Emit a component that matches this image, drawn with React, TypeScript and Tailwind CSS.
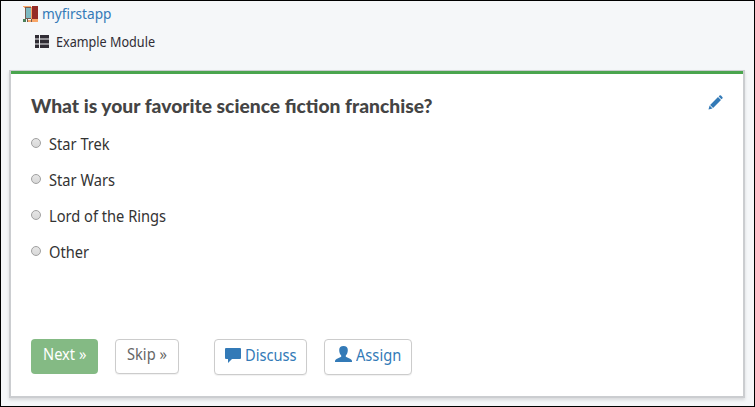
import React from "react";

const body = "font-['Noto_Sans',sans-serif]";

function Logo() {
  return (
    <svg width="15" height="16" viewBox="0 0 15 16" className="mt-[2px] shrink-0" shapeRendering="crispEdges">
      <path fill="#f9a668" d="M0 0h8v1H0zM1 1h1v1H1zM8 1h1v12H8zM9 13h6v3H9zM4 14h4v2H4z" />
      <path fill="#765b50" d="M2 1h1v12H2zM3 1h5v1H3zM3 12h5v1H3zM4 13h1v3H4zM8 13h1v3H8z" />
      <path fill="#7cb9c1" d="M3 2h5v10H3z" />
      <path fill="#942b27" d="M9 0h6v13H9z" />
      <path fill="#4b8058" d="M0 13h3v3H0z" />
    </svg>
  );
}

function ListIcon() {
  return (
    <svg width="14" height="13" viewBox="0 0 14 13" fill="#302d35" className="mb-[2px] shrink-0">
      <path d="M0 0h4v3.600H0zM5 0h9v3.600H5zM0 4.600h4v3.800H0zM5 4.600h9v3.800H5zM0 9.400h4V13H0zM5 9.400h9V13H5z" />
    </svg>
  );
}

function Pencil() {
  return (
    <svg width="15" height="15" viewBox="0 0 15 15" fill="#337ab7" className="shrink-0">
      <path d="M10.700 1.400 11.500.6q.8-.8 1.500 0l1.300 1.300q.7.7 0 1.500l-.9.9zM10 2l3 3-7.900 7.900-3-3zM1.600 10.500l2.900 2.900-4 1.100z" />
    </svg>
  );
}

const options = ["Star Trek", "Star Wars", "Lord of the Rings", "Other"];

const label = "inline-block origin-left scale-x-[0.915] whitespace-nowrap text-[16px]";
const button =
  "flex items-center rounded-[4px] border border-[#ccc] bg-white shadow-[0_1px_1px_rgba(0,0,0,0.06)]";

export default function App() {
  return (
    <div className={`${body} flex h-[407px] w-[755px] flex-col border border-black bg-[#f5f7f9] text-[#333]`}>
      <header className="h-[69px] shrink-0">
        <a className="flex h-6 items-center gap-[4px] pl-[22px] text-[#337ab7]">
          <Logo />
          <span className="inline-block origin-left scale-x-[0.91] text-[15px]">myfirstapp</span>
        </a>
        <div className="mt-[5px] flex h-6 items-center gap-[7px] pl-[34px] text-[#302d35]">
          <ListIcon />
          <span className="inline-block origin-left scale-x-[0.935] text-[13.5px]">Example Module</span>
        </div>
      </header>
      <main className="mx-2 h-[328px] w-[736px] shrink-0 border-x-2 border-t border-b-2 border-[#cbcdd0] bg-white shadow-[0_2px_3px_rgba(0,0,0,0.12)]">
        <div className="h-[3px] bg-[#4aa54e]" />
        <div className="flex justify-between pt-[18px] pr-[20px] pl-[20px]">
          <h1 className="h-[28px] font-['Lato',sans-serif] text-[19.25px] leading-[28px] font-black whitespace-nowrap text-[#444]">
            What is your favorite science fiction franchise?
          </h1>
          <span className="pt-[3px]"><Pencil /></span>
        </div>
        <ul className="mt-[7px] pl-[20px]">
          {options.map((o) => (
            <li key={o} className="flex h-9 items-start">
              <span className="mt-[11px] size-[10px] shrink-0 rounded-full border border-[#a0a0a0] bg-linear-to-b from-[#e6e6e6] to-[#d8d8d8]" />
              <span className={`${label} ml-[8px] leading-[34px]`}>{o}</span>
            </li>
          ))}
        </ul>
        <div className="mt-[68px] flex items-start pl-[20px]">
          <button className="flex h-[35px] w-[67px] items-center rounded-[4px] bg-[#84ba84] pb-[5px] pl-[12px] text-white">
            <span className={label}>Next »</span>
          </button>
          <button className={`${button} ml-[17px] h-[35px] w-[64px] pb-[5px] pl-[11px] text-[#666]`}>
            <span className={label}>Skip »</span>
          </button>
          <button className={`${button} ml-[35px] h-[36px] w-[93px] gap-[4px] pb-[4px] pl-[10px] text-[#337ab7]`}>
            <svg width="16" height="15" viewBox="0 0 16 15" fill="currentColor" className="shrink-0">
              <path d="M1 0h14Q16 0 16 1v9q0 1-1 1H7l-4 4v-4H1Q0 11 0 10V1Q0 0 1 0z" />
            </svg>
            <span className={label}>Discuss</span>
          </button>
          <button className={`${button} ml-[17px] h-[36px] w-[88px] gap-1 pb-[4px] pl-[10px] text-[#337ab7]`}>
            <svg width="17" height="16" viewBox="0 0 17 16" fill="currentColor" className="mb-[2px] shrink-0">
              <path d="M8.500 0c2.800 0 4.300 1.500 4.300 4 0 2.400-.8 4.400-2 5.400v1.300l4.700 2.200q1.500.7 1.500 2.200V16H0v-.9q0-1.500 1.500-2.200l4.700-2.200V9.400c-1.200-1-2-3-2-5.400 0-2.500 1.500-4 4.300-4z" />
            </svg>
            <span className={label}>Assign</span>
          </button>
        </div>
      </main>
    </div>
  );
}
